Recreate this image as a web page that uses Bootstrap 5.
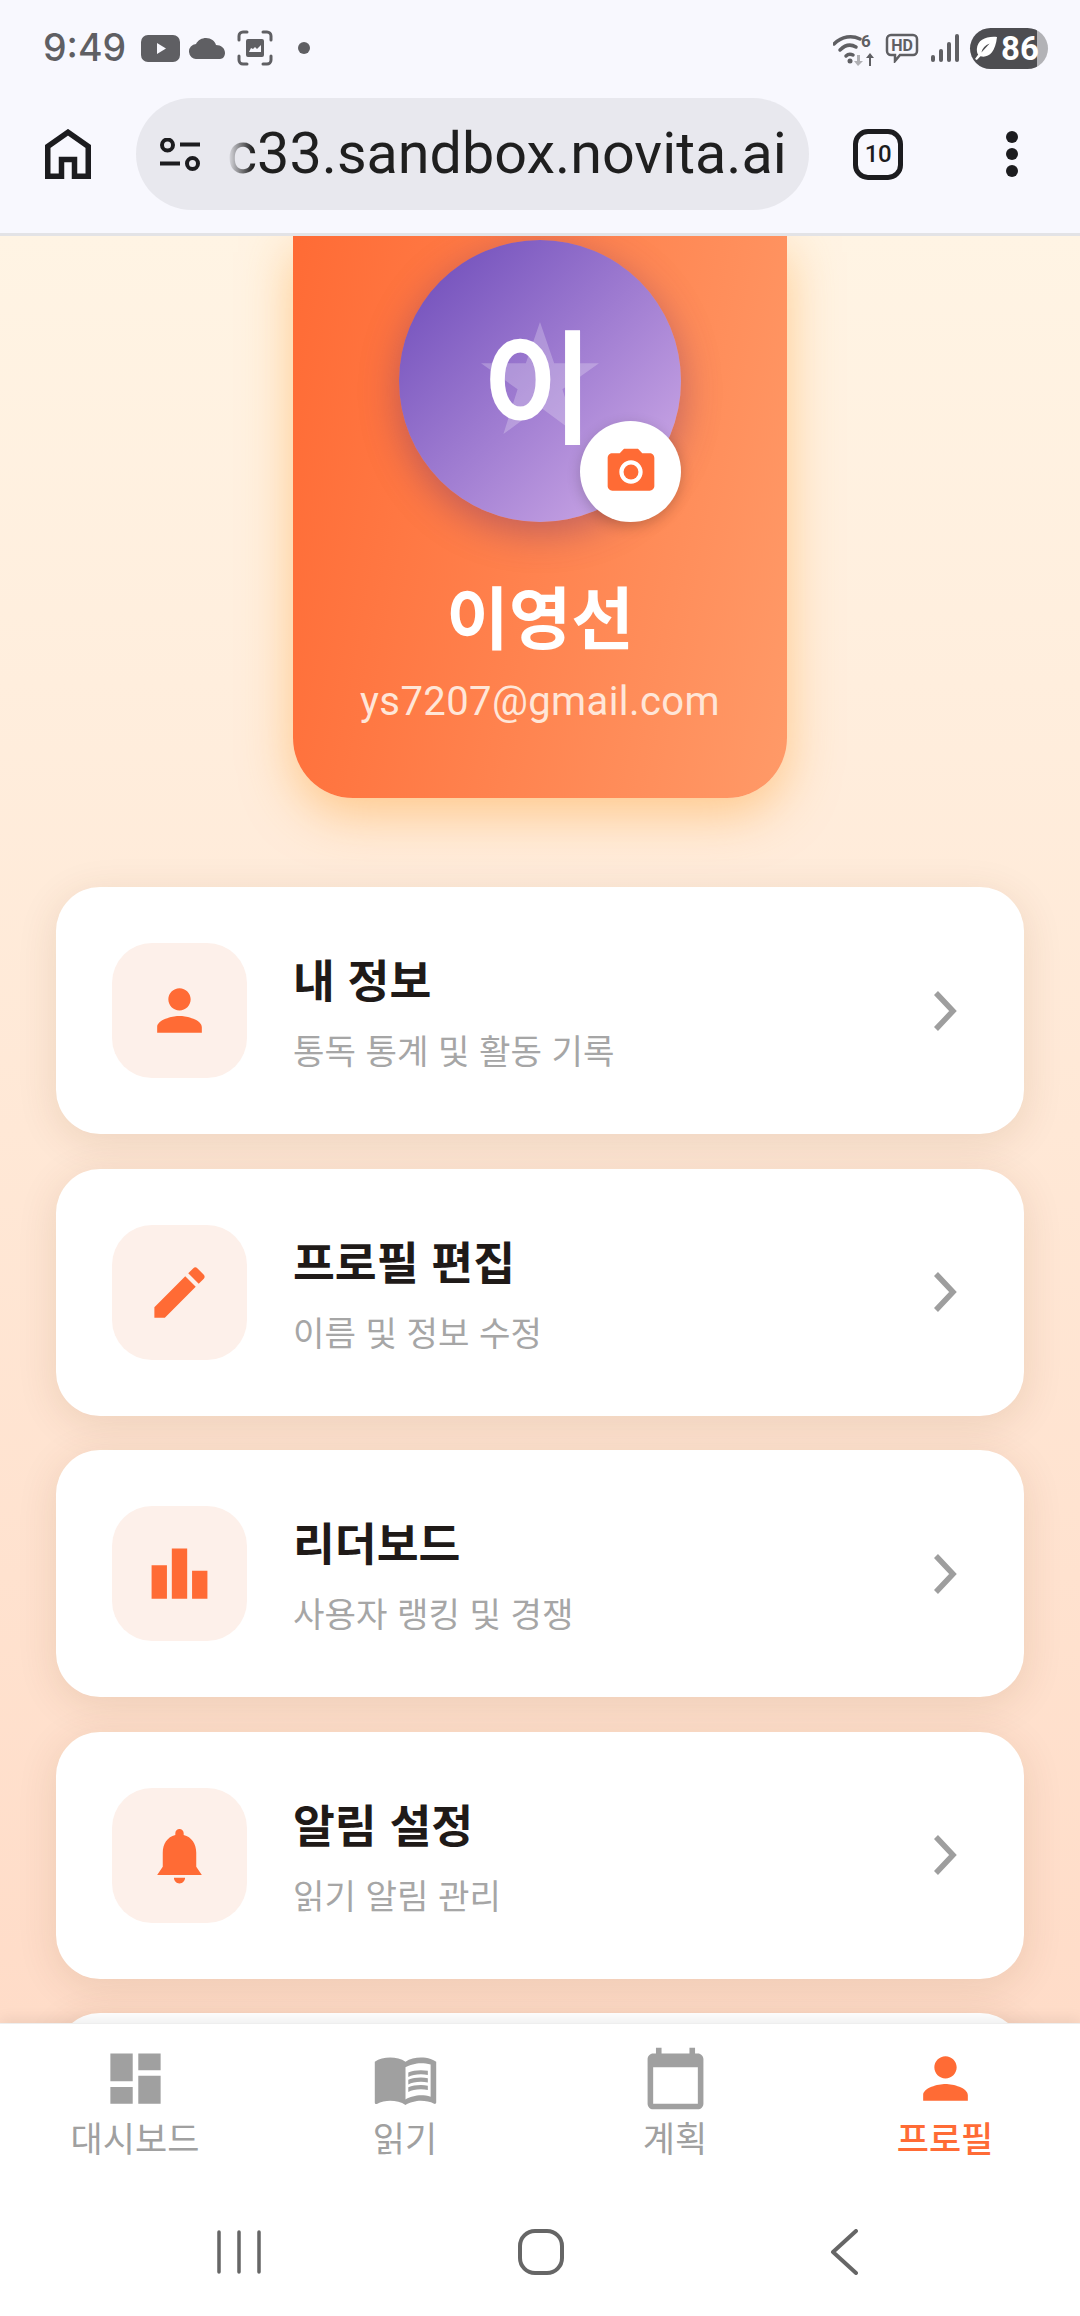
<!DOCTYPE html>
<html lang="ko">
<head>
  <meta charset="UTF-8">
  <meta name="viewport" content="width=device-width, initial-scale=1">
  <title>프로필</title>
  <link href="https://cdn.jsdelivr.net/npm/bootstrap@5.3.0/dist/css/bootstrap.min.css" rel="stylesheet">
  <style>
    body {
      width: 1080px;
      height: 2316px;
      overflow: hidden;
      font-family: Roboto, "Noto Sans CJK KR", sans-serif;
      background: #fff;
    }
    .top-chrome {
      height: 236px;
      background: #f8f8fe;
      border-bottom: 3px solid #e3e3e6;
    }
    .status-row {
      height: 98px;
      padding: 0 32px 2px 43px;
      color: #5f5f63;
    }
    .status-time { font-size: 37.5px; font-weight: 500; font-family: Inter, Roboto, sans-serif; line-height: 1; width: 98px; }
    .status-left svg, .status-right svg { display: block; fill: currentColor; }
    .gap-cloud { margin-left: 9px; }
    .gap-frame { margin-left: 12px; }
    .gap-dot { margin-left: 25px; }
    .gap-hd { margin-left: 6px; }
    .gap-signal { margin-left: 12px; }
    .gap-battery { margin-left: 11px; }
    .battery-pill {
      width: 78px;
      height: 41px;
      padding-left: 5px;
      border-radius: 21px;
      background: linear-gradient(to right, #4d4d51 67px, #b2b2b6 67px);
      color: #fff;
      font-size: 33px;
      font-weight: 700;
      line-height: 41px;
    }
    .tool-row { height: 112px; padding-left: 45px; }
    .omni-box {
      width: 673px;
      height: 112px;
      margin-left: 45px;
      background: #e8e8ee;
      border-radius: 56px;
      padding-left: 24px;
    }
    .omni-url {
      width: 564px;
      margin-left: 27px;
      font-size: 57.5px;
      line-height: 1.1;
      color: #1f1f1f;
      white-space: nowrap;
      -webkit-mask-image: linear-gradient(to right, transparent 0, #000 26px);
      mask-image: linear-gradient(to right, transparent 0, #000 26px);
    }
    .tab-count {
      width: 50px;
      height: 51px;
      margin-left: 44px;
      border: 5.5px solid #1c1c1f;
      border-radius: 15px;
      font-size: 24px;
      font-weight: 500;
      color: #1c1c1f;
      letter-spacing: -.5px;
    }
    .menu-dots { margin-left: 103px; gap: 5px; }
    .menu-dots span { width: 12px; height: 12px; border-radius: 50%; background: #1c1c1f; }

    .page-scroll {
      height: 1787px;
      overflow: hidden;
      padding: 0 56px;
      background: linear-gradient(180deg, #fff4e4 0%, #ffdcc8 100%);
    }
    .profile-hero {
      width: 494px;
      height: 562px;
      margin: 0 auto 89px;
      padding-top: 4px;
      border-radius: 0 0 60px 60px;
      background: linear-gradient(100deg, #ff6b35 0%, #ff9a68 100%);
      box-shadow: 0 16px 50px rgba(255, 165, 60, .5);
      color: #fff;
    }
    .avatar-disc {
      width: 282px;
      height: 282px;
      background: linear-gradient(135deg, #6a48b8 0%, #d4b0ea 100%);
      box-shadow: 0 10px 38px rgba(110, 50, 110, .45);
      margin-bottom: 56px;
    }
    .avatar-star { width: 118px; height: 114px; left: 82px; top: 81px; fill: rgba(255, 255, 255, .24); }
    .avatar-initial {
      font-size: 120px;
      font-weight: 400;
      line-height: 1;
      font-family: "Noto Sans CJK KR", sans-serif;
      color: #fff;
      -webkit-text-stroke: 5px #fff;
      transform: translate(-2px, 0);
    }
    .camera-badge {
      width: 101px;
      height: 101px;
      right: 0;
      bottom: 0;
      background: #fff;
      box-shadow: 0 4px 14px rgba(0, 0, 0, .2);
    }
    .camera-badge svg { width: 56px; height: 56px; fill: #ff6b35; }
    .hero-name {
      font-size: 68px;
      font-weight: 700;
      line-height: 1.1;
      font-family: "Noto Sans CJK KR", sans-serif;
      margin-bottom: 25px;
    }
    .hero-mail { font-size: 40px; line-height: 1.2; color: #ffe6d8; letter-spacing: .4px; }

    .menu-card {
      height: 247px;
      margin-bottom: 34.5px;
      padding: 0 56px;
      border: 0;
      border-radius: 44px;
      box-shadow: 0 8px 40px rgba(100, 60, 20, .12);
    }
    .menu-icon {
      width: 135px;
      height: 135px;
      border-radius: 40px;
      background: #fdf0ea;
      margin-right: 46px;
      flex-shrink: 0;
    }
    .menu-icon svg { width: 67px; height: 67px; fill: #ff6b35; }
    .menu-title {
      font-family: "Noto Sans CJK KR", sans-serif;
      font-size: 45.5px;
      font-weight: 700;
      line-height: 1.3;
      color: #1f1a18;
      margin-bottom: 19px;
    }
    .menu-sub {
      font-family: "Noto Sans CJK KR", sans-serif;
      font-size: 34.2px;
      line-height: 1.3;
      color: #a6a6a6;
    }
    .menu-arrow { width: 30px; height: 44px; margin-right: 8px; fill: none; stroke: #9e9e9e; stroke-width: 5.5; }

    .tab-strip {
      height: 293px;
      background: #fff;
      box-shadow: 0 -3px 14px rgba(0, 0, 0, .08);
      border-top: 1px solid #eeeeee;
      position: relative;
    }
    .tab-items { height: 147px; }
    .tab-entry {
      width: 270px;
      padding-top: 21px;
      color: #a0a0a0;
      font-family: "Noto Sans CJK KR", sans-serif;
      font-size: 35px;
      line-height: 1;
    }
    .tab-entry svg { width: 67px; height: 67px; fill: currentColor; margin-bottom: 7px; display: block; }
    .tab-entry.is-active { color: #ff6b35; font-weight: 500; }
    .sys-nav { height: 145px; padding-top: 16px; color: #666; }
    .sys-nav svg { display: block; fill: none; stroke: currentColor; stroke-linecap: round; stroke-linejoin: round; }
    .sys-slot { width: 0; }
    .sys-recents { margin-left: 239px; }
    .sys-home { margin-left: 302px; }
    .sys-back { margin-left: 303px; }
  </style>
</head>
<body>
  <svg width="0" height="0" class="d-block">
    <symbol id="ic-person" viewBox="0 0 24 24"><path d="M12 12c2.21 0 4-1.79 4-4s-1.79-4-4-4-4 1.79-4 4 1.79 4 4 4zm0 2c-2.67 0-8 1.34-8 4v2h16v-2c0-2.66-5.33-4-8-4z"/></symbol>
    <symbol id="ic-edit" viewBox="0 0 24 24"><path d="M3 17.25V21h3.75L17.81 9.94l-3.75-3.75L3 17.25zM20.71 7.04c.39-.39.39-1.02 0-1.41l-2.34-2.34c-.39-.39-1.02-.39-1.41 0l-1.83 1.83 3.75 3.75 1.83-1.83z"/></symbol>
    <symbol id="ic-board" viewBox="0 0 24 24"><path d="M7.5 21H2V9h5.5v12zm7.25-18h-5.5v18h5.5V3zM22 11h-5.5v10H22V11z"/></symbol>
    <symbol id="ic-bell" viewBox="0 0 24 24"><path d="M12 22c1.1 0 2-.9 2-2h-4c0 1.1.89 2 2 2zm6-6v-5c0-3.07-1.64-5.64-4.5-6.32V4c0-.83-.67-1.5-1.5-1.5s-1.500.67-1.5 1.5v.68C7.63 5.36 6 7.92 6 11v5l-2 3h16l-2-3z"/></symbol>
    <symbol id="ic-arrow" viewBox="0 0 30 44"><path d="M6 4l17 18L6 40"/></symbol>
  </svg>

  <header class="top-chrome">
    <div class="status-row d-flex align-items-center justify-content-between">
      <div class="status-left d-flex align-items-center">
        <span class="status-time">9:49</span>
        <svg width="39" height="27" viewBox="0 0 39 27"><path fill-rule="evenodd" d="M7 0h25a7 7 0 0 1 7 7v13a7 7 0 0 1-7 7H7a7 7 0 0 1-7-7V7a7 7 0 0 1 7-7zm9 8v11l9-5.500z"/></svg>
        <svg class="gap-cloud" width="36" height="21" viewBox="0 0 36 21"><path d="M8 21a7.500 7.500 0 0 1-1-15C9 2 13 0 17 0c5 0 9 3 10 7 5 0 9 3 9 8 0 3-2 6-5 6z"/></svg>
        <svg class="gap-frame" width="36" height="36" viewBox="0 0 36 36"><path fill="none" stroke="currentColor" stroke-width="3" stroke-linecap="round" d="M2 10V6a4 4 0 0 1 4-4h4M26 2h4a4 4 0 0 1 4 4v4M34 26v4a4 4 0 0 1-4 4h-4M10 34H6a4 4 0 0 1-4-4v-4"/><path fill-rule="evenodd" d="M11 9h14a2 2 0 0 1 2 2v14a2 2 0 0 1-2 2H11a2 2 0 0 1-2-2V11a2 2 0 0 1 2-2zm1 13h12v-7l-4 4-2-2-2 2-2-1z"/></svg>
        <svg class="gap-dot" width="12" height="12" viewBox="0 0 12 12"><circle cx="6" cy="6" r="6"/></svg>
      </div>
      <div class="status-right d-flex align-items-center">
        <svg width="46" height="38" viewBox="0 -4 46 38"><g fill="none" stroke="currentColor" stroke-width="3.500" stroke-linecap="round"><path d="M1 11C9 3 19 2 27 6"/><path d="M7 17c5-5 11-6 16-3"/><path d="M13 23c2-2 5-2 7-1"/></g><circle cx="17" cy="28" r="2.500"/><text x="28" y="14" font-size="17" font-weight="700" font-family="Roboto, sans-serif">6</text><path d="M37 20l-4 5h3v8h2v-8h3z"/><path d="M25 33l-4-5h3v-6h3v6h3z" fill="#b0b0b4"/></svg>
        <svg class="gap-hd" width="34" height="30" viewBox="0 0 34 30"><path fill="none" stroke="currentColor" stroke-width="2.500" d="M6 2h22a4 4 0 0 1 4 4v12a4 4 0 0 1-4 4H15l-5 6v-6H6a4 4 0 0 1-4-4V6a4 4 0 0 1 4-4z"/><text x="17" y="18" text-anchor="middle" font-size="16" font-weight="700" font-family="Roboto, sans-serif">HD</text></svg>
        <svg class="gap-signal" width="28" height="28" viewBox="0 0 28 28"><rect x="0" y="21" width="4" height="7" rx="2"/><rect x="8" y="15" width="4" height="13" rx="2"/><rect x="16" y="8" width="4" height="20" rx="2"/><rect x="24" y="0" width="4" height="28" rx="2"/></svg>
        <div class="battery-pill d-flex align-items-center gap-battery">
          <svg width="22" height="24" viewBox="0 0 24 26" class="flex-shrink-0 me-1"><path fill="#fff" d="M24 1C12 0 3 4 2 14c0 3 .5 5 1.500 6L0 25l2 1 4-4c8 2 16-3 18-21zM16 8L7 18c1-5 4-8 9-10z"/></svg>
          <span>86</span>
        </div>
      </div>
    </div>
    <div class="tool-row d-flex align-items-center">
      <svg width="46" height="50" viewBox="0 0 46 50" fill="none" stroke="#1c1c1f" stroke-width="5.500"><path d="M2.750 47.250V17.500L23 3.250l20.250 14.250v29.750H29.500V30.500h-13v16.750z"/></svg>
      <div class="omni-box d-flex align-items-center">
        <svg width="40" height="33" viewBox="0 0 40 33" fill="none" stroke="#1c1c1f" stroke-width="4" class="flex-shrink-0"><circle cx="7.500" cy="7" r="5.500"/><path d="M20 6.500h20M0 25.500h20"/><circle cx="32.500" cy="25.500" r="5.500"/></svg>
        <div class="omni-url">c33.sandbox.novita.ai</div>
      </div>
      <div class="tab-count d-flex align-items-center justify-content-center">10</div>
      <div class="menu-dots d-flex flex-column"><span></span><span></span><span></span></div>
    </div>
  </header>

  <main class="page-scroll">
    <section class="profile-hero d-flex flex-column align-items-center text-center">
      <div class="avatar-disc rounded-circle position-relative d-flex align-items-center justify-content-center flex-shrink-0">
        <svg class="avatar-star position-absolute" viewBox="0 0 100 95"><polygon points="50,0 62,35 100,35 69,57 81,95 50,72 19,95 31,57 0,35 38,35"/></svg>
        <span class="avatar-initial position-relative">이</span>
        <div class="camera-badge rounded-circle position-absolute d-flex align-items-center justify-content-center">
          <svg viewBox="0 0 24 24"><circle cx="12" cy="12" r="3.200"/><path d="M9 2L7.170 4H4c-1.100 0-2 .9-2 2v12c0 1.100.9 2 2 2h16c1.100 0 2-.9 2-2V6c0-1.100-.9-2-2-2h-3.170L15 2H9zm3 15c-2.760 0-5-2.240-5-5s2.240-5 5-5 5 2.240 5 5-2.240 5-5 5z"/></svg>
        </div>
      </div>
      <div class="hero-name">이영선</div>
      <div class="hero-mail">ys7207@gmail.com</div>
    </section>

    <div class="card menu-card flex-row align-items-center">
      <div class="menu-icon d-flex align-items-center justify-content-center"><svg><use href="#ic-person"/></svg></div>
      <div class="flex-grow-1"><div class="menu-title">내 정보</div><div class="menu-sub">통독 통계 및 활동 기록</div></div>
      <svg class="menu-arrow"><use href="#ic-arrow"/></svg>
    </div>
    <div class="card menu-card flex-row align-items-center">
      <div class="menu-icon d-flex align-items-center justify-content-center"><svg><use href="#ic-edit"/></svg></div>
      <div class="flex-grow-1"><div class="menu-title">프로필 편집</div><div class="menu-sub">이름 및 정보 수정</div></div>
      <svg class="menu-arrow"><use href="#ic-arrow"/></svg>
    </div>
    <div class="card menu-card flex-row align-items-center">
      <div class="menu-icon d-flex align-items-center justify-content-center"><svg><use href="#ic-board"/></svg></div>
      <div class="flex-grow-1"><div class="menu-title">리더보드</div><div class="menu-sub">사용자 랭킹 및 경쟁</div></div>
      <svg class="menu-arrow"><use href="#ic-arrow"/></svg>
    </div>
    <div class="card menu-card flex-row align-items-center">
      <div class="menu-icon d-flex align-items-center justify-content-center"><svg><use href="#ic-bell"/></svg></div>
      <div class="flex-grow-1"><div class="menu-title">알림 설정</div><div class="menu-sub">읽기 알림 관리</div></div>
      <svg class="menu-arrow"><use href="#ic-arrow"/></svg>
    </div>
    <div class="card menu-card"></div>
  </main>

  <footer class="tab-strip">
    <nav class="tab-items d-flex">
      <div class="tab-entry d-flex flex-column align-items-center">
        <svg viewBox="0 0 24 24"><path d="M3 13h8V3H3v10zm0 8h8v-6H3v6zm10 0h8V11h-8v10zm0-18v6h8V3h-8z"/></svg>대시보드
      </div>
      <div class="tab-entry d-flex flex-column align-items-center">
        <svg viewBox="0 0 24 24"><path d="M21 5c-1.110-.35-2.330-.5-3.500-.5-1.950 0-4.050.4-5.500 1.500-1.450-1.100-3.550-1.500-5.500-1.500S2.450 4.900 1 6v14.650c0 .25.25.5.5.5.1 0 .15-.05.25-.05C3.100 20.450 5.050 20 6.500 20c1.950 0 4.050.4 5.500 1.500 1.350-.85 3.800-1.500 5.500-1.500 1.650 0 3.350.3 4.750 1.050.1.05.15.05.25.05.25 0 .5-.25.5-.5V6c-.6-.45-1.250-.75-2-1zm0 13.500c-1.100-.35-2.300-.5-3.500-.5-1.700 0-4.150.65-5.500 1.500V8c1.350-.85 3.800-1.500 5.500-1.500 1.200 0 2.400.15 3.500.5v11.500z"/><path d="M17.500 10.500c.88 0 1.730.09 2.500.26V9.240c-.79-.15-1.640-.24-2.500-.24-1.700 0-3.240.29-4.500.83v1.660c1.130-.64 2.700-.99 4.500-.99zM13 12.490v1.660c1.130-.64 2.700-.99 4.500-.99.88 0 1.730.09 2.500.26V11.900c-.79-.15-1.640-.24-2.500-.24-1.700 0-3.240.3-4.500.83zM17.500 14.330c-1.700 0-3.240.29-4.500.83v1.660c1.130-.64 2.700-.99 4.500-.99.88 0 1.730.09 2.500.26v-1.520c-.79-.16-1.640-.24-2.500-.24z"/></svg>읽기
      </div>
      <div class="tab-entry d-flex flex-column align-items-center">
        <svg viewBox="0 0 24 24"><path d="M20 3h-1V1h-2v2H7V1H5v2H4c-1.100 0-2 .9-2 2v16c0 1.100.9 2 2 2h16c1.100 0 2-.9 2-2V5c0-1.100-.9-2-2-2zm0 18H4V8h16v13z"/></svg>계획
      </div>
      <div class="tab-entry is-active d-flex flex-column align-items-center">
        <svg><use href="#ic-person"/></svg>프로필
      </div>
    </nav>
    <div class="sys-nav d-flex align-items-center">
      <div class="sys-slot sys-recents d-flex justify-content-center">
        <svg class="flex-shrink-0" width="44" height="44" viewBox="0 0 44 44" stroke-width="3.500"><path d="M2 2v40M22 2v40M42 2v40"/></svg>
      </div>
      <div class="sys-slot sys-home d-flex justify-content-center">
        <svg class="flex-shrink-0" width="46" height="46" viewBox="0 0 46 46" stroke-width="4"><rect x="2" y="2" width="42" height="42" rx="15"/></svg>
      </div>
      <div class="sys-slot sys-back d-flex justify-content-center">
        <svg class="flex-shrink-0" width="28" height="46" viewBox="0 0 28 46" stroke-width="4"><path d="M26 2L3 23l23 21"/></svg>
      </div>
    </div>
  </footer>
</body>
</html>
